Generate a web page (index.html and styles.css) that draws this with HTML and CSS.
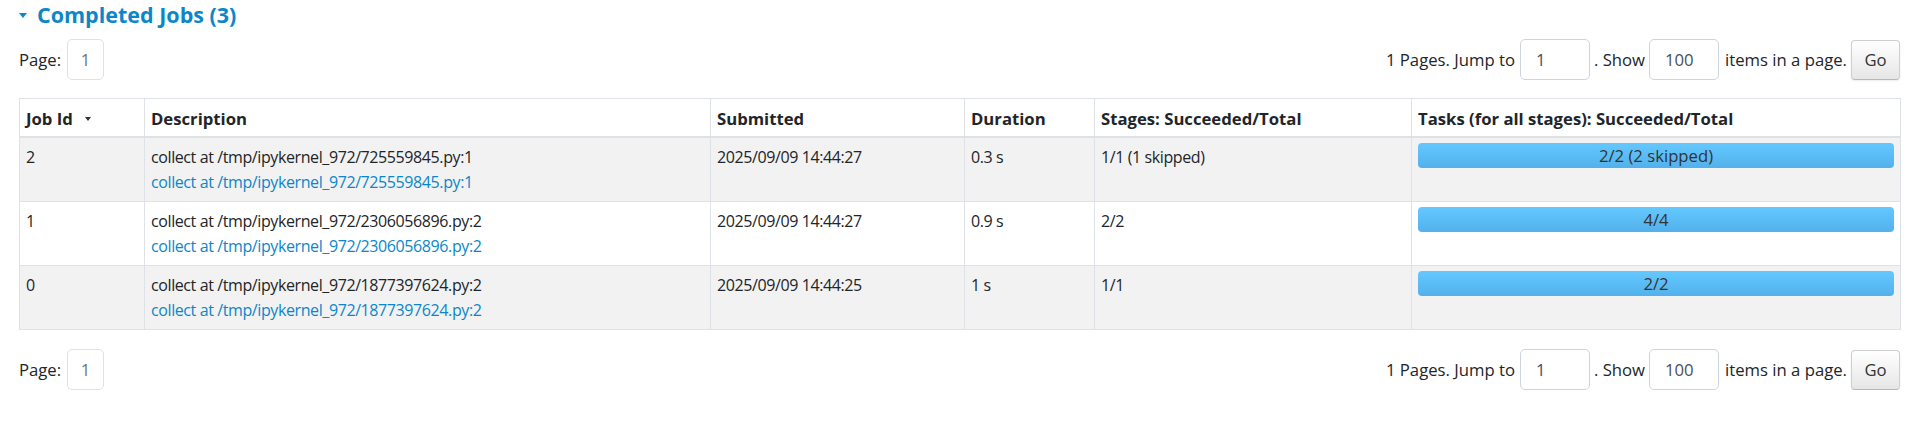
FILE: index.html
```html
<!DOCTYPE html>
<html>
<head>
<meta charset="utf-8">
<link rel="stylesheet" href="styles.css">
</head>
<body>
<div class="page">
  <h4 class="section-title"><span class="caret"></span><a class="title-link">Completed Jobs (3)</a></h4>

  <div class="pager">
    <div class="pager-left">
      <span class="pager-label">Page:</span>
      <span class="page-box">1</span>
    </div>
    <form class="pager-right">
      <span class="txt txt-jump">1 Pages. Jump to</span>
      <input class="num-input" type="text" value="1">
      <span class="txt txt-show">. Show</span>
      <input class="num-input" type="text" value="100">
      <span class="txt txt-items">items in a page.</span>
      <button class="go-btn" type="button">Go</button>
    </form>
  </div>

  <table class="jobs">
    <colgroup>
      <col class="c-id"><col class="c-desc"><col class="c-sub"><col class="c-dur"><col class="c-stages"><col class="c-tasks">
    </colgroup>
    <thead>
      <tr>
        <th>Job Id<span class="sort-arrow"></span></th>
        <th>Description</th>
        <th>Submitted</th>
        <th>Duration</th>
        <th>Stages: Succeeded/Total</th>
        <th>Tasks (for all stages): Succeeded/Total</th>
      </tr>
    </thead>
    <tbody>
      <tr class="odd">
        <td>2</td>
        <td><div>collect at /tmp/ipykernel_972/725559845.py:1</div><a class="desc-link">collect at /tmp/ipykernel_972/725559845.py:1</a></td>
        <td>2025/09/09 14:44:27</td>
        <td>0.3 s</td>
        <td>1/1 (1 skipped)</td>
        <td class="task-cell"><div class="progress"><span class="progress-text">2/2 (2 skipped)</span></div></td>
      </tr>
      <tr>
        <td>1</td>
        <td><div>collect at /tmp/ipykernel_972/2306056896.py:2</div><a class="desc-link">collect at /tmp/ipykernel_972/2306056896.py:2</a></td>
        <td>2025/09/09 14:44:27</td>
        <td>0.9 s</td>
        <td>2/2</td>
        <td class="task-cell"><div class="progress"><span class="progress-text">4/4</span></div></td>
      </tr>
      <tr class="odd">
        <td>0</td>
        <td><div>collect at /tmp/ipykernel_972/1877397624.py:2</div><a class="desc-link">collect at /tmp/ipykernel_972/1877397624.py:2</a></td>
        <td>2025/09/09 14:44:25</td>
        <td>1 s</td>
        <td>1/1</td>
        <td class="task-cell"><div class="progress"><span class="progress-text">2/2</span></div></td>
      </tr>
    </tbody>
  </table>

  <div class="pager pager-bottom">
    <div class="pager-left">
      <span class="pager-label">Page:</span>
      <span class="page-box">1</span>
    </div>
    <form class="pager-right">
      <span class="txt txt-jump">1 Pages. Jump to</span>
      <input class="num-input" type="text" value="1">
      <span class="txt txt-show">. Show</span>
      <input class="num-input" type="text" value="100">
      <span class="txt txt-items">items in a page.</span>
      <button class="go-btn" type="button">Go</button>
    </form>
  </div>
</div>
</body>
</html>
```

FILE: styles.css
```css
html, body {
  margin: 0;
  padding: 0;
  background: #ffffff;
}

body {
  font-family: "Open Sans", "Noto Sans", sans-serif;
  font-size: 16.7px;
  line-height: 25px;
  color: #212529;
}

.page {
  padding: 0 19px;
}

.section-title {
  margin: 2px 0 0 0;
  font-size: 21.5px;
  line-height: 26px;
  font-weight: 700;
  color: #0b87c9;
  display: flex;
  align-items: center;
}

.caret {
  display: inline-block;
  width: 0;
  height: 0;
  border-left: 4px solid transparent;
  border-right: 4px solid transparent;
  border-top: 5px solid #0b87c9;
  margin-right: 10px;
  margin-top: 1px;
}

.title-link {
  color: #0b87c9;
  text-decoration: none;
}

.pager {
  display: flex;
  justify-content: space-between;
  align-items: center;
  margin-top: 11px;
  height: 41px;
}

.pager-bottom {
  margin-top: 19px;
}

.pager-left {
  display: flex;
  align-items: center;
}

.pager-label {
  margin-right: 6px;
}

.page-box {
  box-sizing: border-box;
  width: 37px;
  height: 41px;
  border: 1px solid #dee2e6;
  border-radius: 5px;
  display: flex;
  align-items: center;
  justify-content: center;
  color: #6c757d;
}

.pager-right {
  display: flex;
  align-items: center;
  margin: 0;
}

.txt-jump { margin-right: 5px; }
.txt-show { margin: 0 4px; }
.txt-items { margin: 0 4px 0 6px; }

.num-input {
  box-sizing: border-box;
  width: 70px;
  height: 41px;
  border: 1px solid #ced4da;
  border-radius: 5px;
  padding: 0 0 0 15px;
  font-family: inherit;
  font-size: 16.7px;
  color: #495057;
  background: #fff;
  outline: none;
}

.go-btn {
  box-sizing: border-box;
  width: 49px;
  height: 40px;
  padding: 0;
  font-family: inherit;
  font-size: 16.7px;
  color: #333;
  background: linear-gradient(to bottom, #ffffff, #e6e6e6);
  border: 1px solid #cfcfcf;
  border-bottom-color: #b8b8b8;
  border-radius: 4px;
  box-shadow: 0 1px 2px rgba(0, 0, 0, 0.08);
}

.jobs {
  width: 100%;
  margin-top: 18px;
  border-collapse: collapse;
  table-layout: fixed;
  border: 1px solid #dee2e6;
}

.c-id { width: 125px; }
.c-desc { width: 566px; }
.c-sub { width: 254px; }
.c-dur { width: 130px; }
.c-stages { width: 317px; }
.c-tasks { width: 489px; }

.jobs th {
  text-align: left;
  font-weight: 700;
  padding: 7px 6px 5px 6px;
  border: 1px solid #dee2e6;
  border-bottom: 2px solid #dee2e6;
  vertical-align: top;
  white-space: nowrap;
}

.jobs td {
  padding: 7px 6px 6px 6px;
  border: 1px solid #dee2e6;
  vertical-align: top;
  height: 50px;
  font-size: 16px;
  letter-spacing: -0.4px;
}

.jobs td.task-cell {
  font-size: 16.7px;
  letter-spacing: 0;
}

.jobs tr.odd td {
  background: #f2f2f2;
}

.sort-arrow {
  display: inline-block;
  width: 0;
  height: 0;
  border-left: 3px solid transparent;
  border-right: 3px solid transparent;
  border-top: 4px solid #333;
  margin-left: 12px;
  vertical-align: 4px;
}

.desc-link {
  color: #0b87c9;
  text-decoration: none;
}

.progress {
  height: 25px;
  margin-top: -2px;
  border-radius: 4px;
  background: linear-gradient(to bottom, #64c8ff, #52b1ec);
  display: flex;
  align-items: center;
  justify-content: center;
}

.progress-text {
  color: #333;
  line-height: 25px;
}
```
